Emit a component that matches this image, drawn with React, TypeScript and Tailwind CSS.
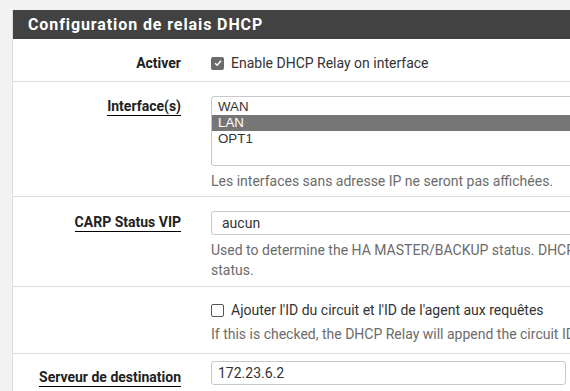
export default function App() {
  const font = { fontFamily: 'Roboto, "Liberation Sans", sans-serif' };
  return (
    <div className="w-[570px] h-[391px] overflow-hidden bg-[#f2f2f2] pt-[10px] pl-[12px]" style={font}>
      <div className="w-[640px] bg-white border-l border-[#dcdcdc]">
        <div className="h-[29px] bg-[#424242] pl-[15px] flex items-center">
          <h2 className="text-white font-bold text-[16px] tracking-[0.9px] whitespace-nowrap">Configuration de relais DHCP</h2>
        </div>

        {/* Activer */}
        <div className="flex items-start h-[43px] pt-[14px] border-b border-[#dddddd] text-[14px] leading-[20px]">
          <div className="w-[168px] shrink-0 text-right font-bold text-[#212121]">Activer</div>
          <div className="pl-[30px] h-[20px] flex items-center gap-[7px] text-[#333]">
            <span className="w-[13px] h-[13px] rounded-[2px] bg-[#6b6b6b] flex items-center justify-center">
              <svg viewBox="0 0 12 12" className="w-[10px] h-[10px]">
                <path d="M2.5 6.2 L5 8.6 L9.6 3.4" fill="none" stroke="white" strokeWidth="1.8" />
              </svg>
            </span>
            <span className="whitespace-nowrap">Enable DHCP Relay on interface</span>
          </div>
        </div>

        {/* Interfaces */}
        <div className="flex items-start border-b border-[#dddddd] pt-[14px] h-[115px] text-[14px] leading-[20px]">
          <div className="w-[168px] shrink-0 text-right">
            <span className="font-bold text-[#212121] border-b border-black pb-[1px]">Interface(s)</span>
          </div>
          <div className="pl-[30px] flex-1 min-w-0">
            <div className="h-[70px] border border-[#c8c8c8] rounded-l-[3px] pt-[2px] text-[13.33px] text-[#333] leading-[16px]" style={{ fontFamily: '"Liberation Sans", Arial, sans-serif' }}>
              <div className="pl-[6px]">WAN</div>
              <div className="pl-[6px] bg-[#767676] text-white">LAN</div>
              <div className="pl-[6px]">OPT1</div>
            </div>
            <div className="mt-[5px] text-[#6b6b6b] whitespace-nowrap">Les interfaces sans adresse IP ne seront pas affichées.</div>
          </div>
        </div>

        {/* CARP */}
        <div className="flex items-start border-b border-[#dddddd] pt-[14px] h-[90px] text-[14px] leading-[20px]">
          <div className="w-[168px] shrink-0 text-right pt-[1px]">
            <span className="font-bold text-[#212121] border-b border-black pb-[1px] whitespace-nowrap">CARP Status VIP</span>
          </div>
          <div className="pl-[30px] flex-1 min-w-0">
            <div className="h-[24px] border border-[#c8c8c8] rounded-l-[3px] pl-[10px] flex items-center text-[#333]">aucun</div>
            <div className="mt-[5px] text-[#6b6b6b]">
              <div className="whitespace-nowrap">Used to determine the HA MASTER/BACKUP status. DHCP Relay will be stopped</div>
              <div>status.</div>
            </div>
          </div>
        </div>

        {/* Circuit */}
        <div className="flex items-start border-b border-[#dddddd] h-[67px] pt-[13px] text-[14px] leading-[20px]">
          <div className="w-[168px] shrink-0" />
          <div className="pl-[30px] flex-1 min-w-0">
            <div className="h-[20px] flex items-center gap-[7px] text-[#333]">
              <span className="w-[13px] h-[13px] rounded-[2px] border border-[#555] bg-white" />
              <span className="whitespace-nowrap">Ajouter l'ID du circuit et l'ID de l'agent aux requêtes</span>
            </div>
            <div className="mt-[4px] text-[#6b6b6b] whitespace-nowrap">If this is checked, the DHCP Relay will append the circuit ID and the agent ID</div>
          </div>
        </div>

        {/* Serveur */}
        <div className="flex items-start pt-[7px] h-[40px] text-[14px] leading-[20px]">
          <div className="w-[168px] shrink-0 text-right pt-[6px]">
            <span className="font-bold text-[#212121] border-b border-black pb-[1px] whitespace-nowrap">Serveur de destination</span>
          </div>
          <div className="pl-[30px]">
            <div className="w-[355px] h-[24px] border border-[#c8c8c8] rounded-[3px] pl-[6px] flex items-center text-[#333]">172.23.6.2</div>
          </div>
        </div>
      </div>
    </div>
  );
}
